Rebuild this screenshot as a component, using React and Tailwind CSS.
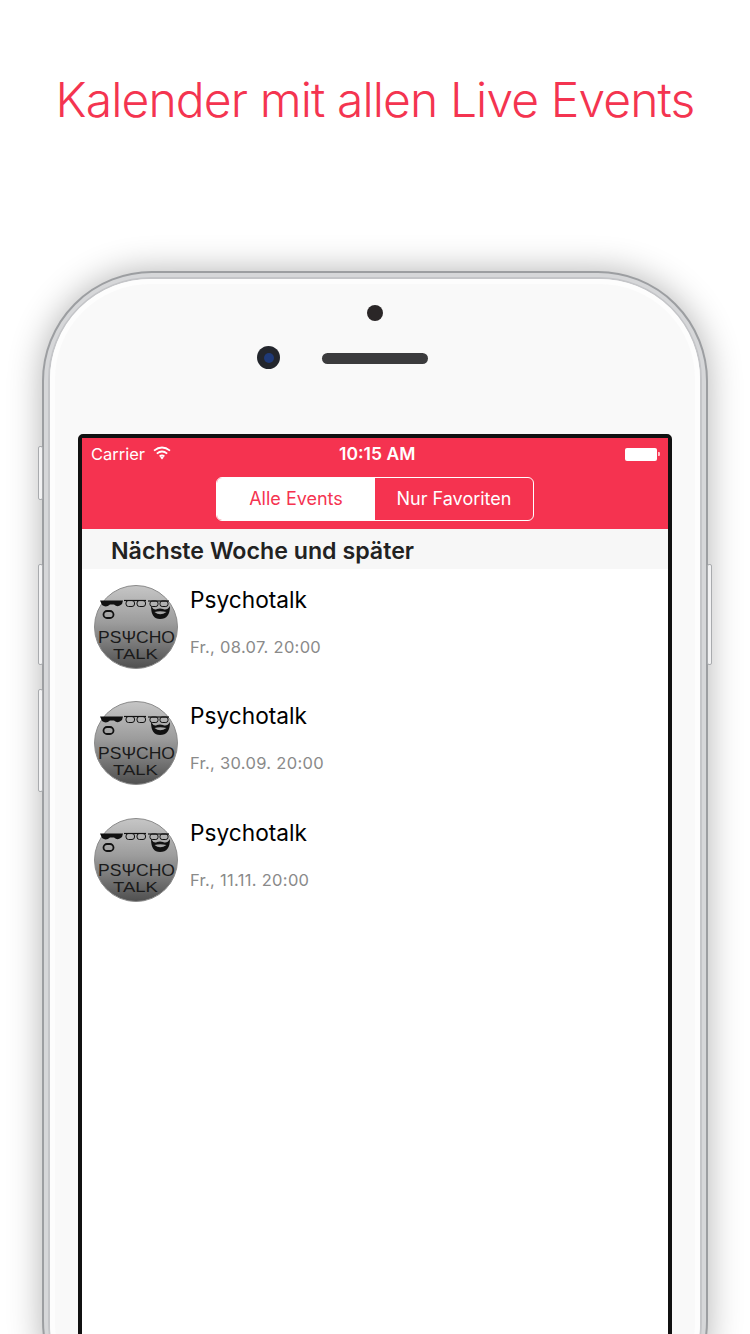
import React from "react";

const events = [
  { title: "Psychotalk", date: "Fr., 08.07. 20:00", gap: "mb-[32px]" },
  { title: "Psychotalk", date: "Fr., 30.09. 20:00", gap: "mb-[33px]" },
  { title: "Psychotalk", date: "Fr., 11.11. 20:00", gap: "" },
];

const Avatar = ({ id }) => (
  <svg width="84" height="84" viewBox="0 0 84 84" className="shrink-0">
    <defs>
      <linearGradient id={id} x1="0" y1="0" x2="0" y2="1">
        <stop offset="0" stopColor="#c6c6c6" />
        <stop offset="0.45" stopColor="#9c9c9c" />
        <stop offset="1" stopColor="#4f4f4f" />
      </linearGradient>
    </defs>
    <circle cx="42" cy="42" r="41.5" fill={`url(#${id})`} stroke="#8a8a8a" />
    {/* sunglasses man */}
    <path d="M6 15.5 H29 L28 19 Q24 23 20 19.5 H16 Q12 23 8 20 Z" fill="#111" />
    <rect x="9.5" y="26" width="10" height="7" rx="3.5" fill="none" stroke="#111" strokeWidth="1.8" />
    {/* middle glasses */}
    <path d="M30 15.5 H52" fill="none" stroke="#111" strokeWidth="1.2" />
    <rect x="32" y="15.5" width="8.5" height="6" rx="2.5" fill="none" stroke="#111" strokeWidth="1" />
    <rect x="43" y="15.5" width="8.5" height="6" rx="2.5" fill="none" stroke="#111" strokeWidth="1" />
    {/* bearded man */}
    <path d="M54 16 H75" fill="none" stroke="#111" strokeWidth="1.2" />
    <rect x="56" y="16" width="8" height="5.5" rx="2.2" fill="none" stroke="#111" strokeWidth="1" />
    <rect x="66" y="16" width="8" height="5.5" rx="2.2" fill="none" stroke="#111" strokeWidth="1" />
    <path d="M57 21 Q57 34 66 34 Q76 34 76 21 Q73 26 69 24 Q66 23 63 24 Q60 26 57 21 Z M60.5 27 Q66 31.5 72.5 27 Q66 25.5 60.5 27 Z" fill="#111" fillRule="evenodd" />
    <text x="42.5" y="57.5" textAnchor="middle" fontFamily="'Liberation Sans', sans-serif" fontSize="17" fill="#1a1a1a" textLength="77" lengthAdjust="spacingAndGlyphs">PS&#936;CHO</text>
    <text x="41.5" y="73.5" textAnchor="middle" fontFamily="'Liberation Sans', sans-serif" fontSize="14.5" fill="#1a1a1a" textLength="45" lengthAdjust="spacingAndGlyphs">TALK</text>
  </svg>
);

const SideButton = ({ className }) => (
  <div className={`absolute w-[5px] rounded-[2px] border border-[#a9abae] bg-[#f2f2f3] ${className}`} />
);

export default function App() {
  return (
    <div className="relative flex h-[1334px] w-[750px] flex-col items-center overflow-hidden bg-white font-['Inter',sans-serif]">
      <h1 className="flex h-[271px] shrink-0 items-start pt-[70px] text-[48px] leading-[60px] font-light tracking-[-0.9px] whitespace-nowrap text-[#f43450]">
        Kalender mit allen Live Events
      </h1>

      <div className="relative h-[1063px] w-[666px] shrink-0">
        {/* phone body */}
        <div className="relative h-[1160px] rounded-[110px] border-[2px] border-[#9c9ea1] bg-[#d6d7d9] p-[4px] shadow-[0_0_34px_rgba(0,0,0,0.3)]">
          <div className="h-full rounded-[103px] border-[2px] border-[#c4c5c8] bg-[#f9f9f9]">
            <div className="h-full rounded-[100px] border-[5px] border-[#fdfdfd] px-[23px] pt-[150px]">
              <div className="relative flex h-[1000px] flex-col rounded-t-[5px] border-[4px] border-[#111] bg-white">
                <div className="h-[91px] shrink-0 bg-[#f53350] text-white">
                  <div className="flex h-[32px] items-center px-[9px] text-[16.5px]">
                    <span>Carrier</span>
                    <svg width="18" height="14" viewBox="0 0 18 14" className="ml-[8px] -translate-y-[1px]" fill="none" stroke="#fff" strokeWidth="1.8">
                      <path d="M1 4.6 Q9 -1.6 17 4.6" />
                      <path d="M3.8 7.6 Q9 3.4 14.2 7.6" />
                      <path d="M6.6 10.4 Q9 8.6 11.4 10.4" />
                      <path d="M7.2 11.4 L9 13.4 L10.8 11.4 Q9 10.2 7.2 11.4 Z" fill="#fff" stroke="none" />
                    </svg>
                    <span className="ml-[168px] text-[17.5px] font-semibold">10:15 AM</span>
                    <div className="mr-[-1px] ml-auto flex items-center">
                      <div className="h-[13px] w-[32px] rounded-[2px] bg-white" />
                      <div className="ml-[1px] h-[4px] w-[2px] rounded-r-[1px] bg-[#ffc4cc]" />
                    </div>
                  </div>
                  <div className="mx-auto mt-[7px] flex h-[44px] w-[318px] overflow-hidden rounded-[6px] border border-white text-[18px] leading-none">
                    <div className="flex w-[158px] items-center justify-center bg-white text-[#f53350]">Alle Events</div>
                    <div className="flex flex-1 items-center justify-center">Nur Favoriten</div>
                  </div>
                </div>

                <div className="flex h-[40px] shrink-0 items-center bg-[#f7f7f7] pt-[4px] pl-[29px] text-[23.2px] font-semibold text-[#222]">
                  Nächste Woche und später
                </div>

                <div className="flex flex-col pt-[16px] pl-[12px]">
                  {events.map((event, i) => (
                    <div key={i} className={`flex gap-[12px] ${event.gap}`}>
                      <Avatar id={`avatar-${i}`} />
                      <div className="flex flex-col">
                        <div className="text-[22.7px] leading-[30px] text-black">{event.title}</div>
                        <div className="mt-[20px] text-[16.5px] leading-[24px] tracking-[0.3px] text-[#8a8a8a]">{event.date}</div>
                      </div>
                    </div>
                  ))}
                </div>

                {/* camera and speaker sit above the screen */}
                <div className="absolute -top-[133px] left-[285px] h-[16px] w-[16px] rounded-full bg-[#2a2627]" />
                <div className="absolute -top-[92px] left-[175px] flex h-[23px] w-[23px] items-center justify-center rounded-full bg-[#23262d]">
                  <div className="h-[10px] w-[10px] rounded-full bg-[#1f3a78]" />
                </div>
                <div className="absolute -top-[85px] left-[240px] h-[11px] w-[106px] rounded-full bg-[#3b3b3d]" />
              </div>
            </div>
          </div>
        </div>

        <SideButton className="top-[175px] -left-[4px] h-[54px]" />
        <SideButton className="top-[293px] -left-[4px] h-[101px]" />
        <SideButton className="top-[418px] -left-[4px] h-[103px]" />
        <SideButton className="top-[293px] -right-[4px] h-[101px]" />
      </div>
    </div>
  );
}
